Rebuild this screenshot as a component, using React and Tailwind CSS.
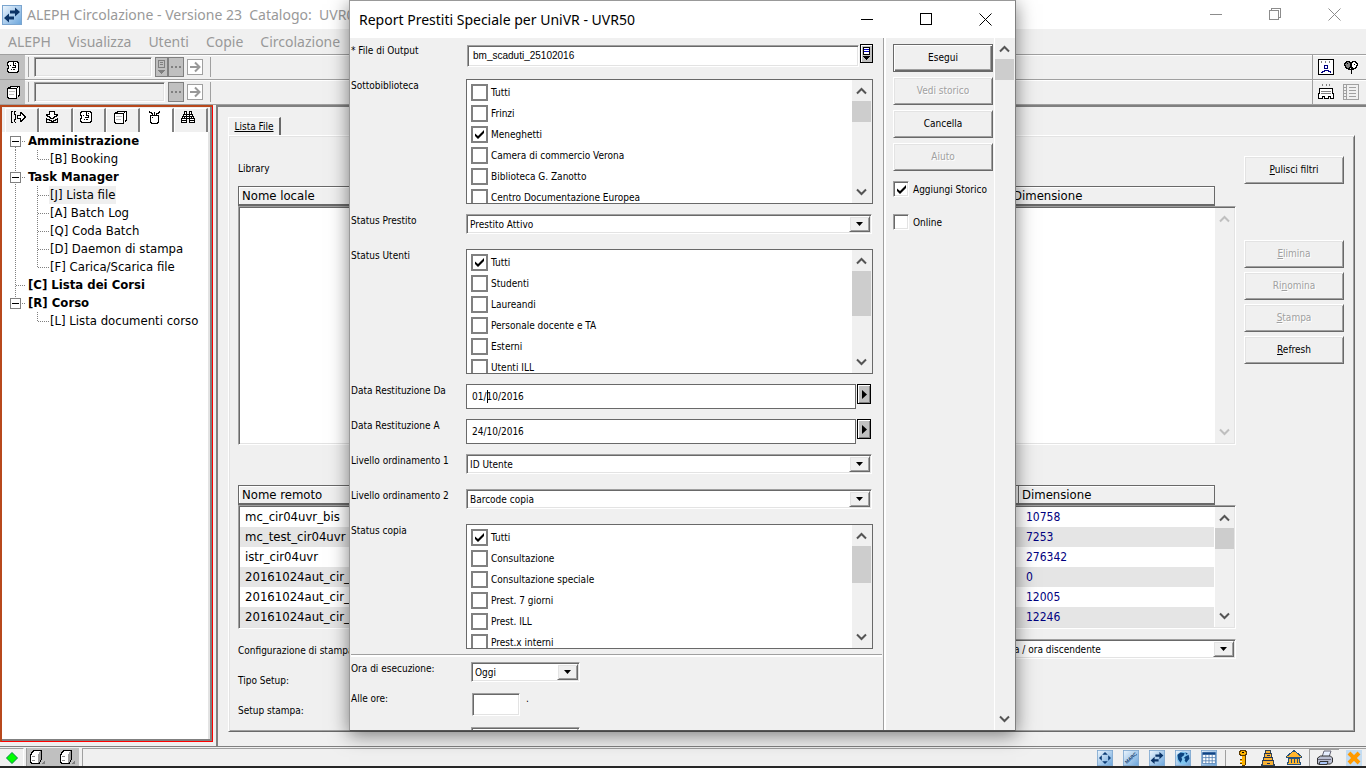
import { useState } from 'react';

const raised = 'border border-t-white border-l-white border-r-[#696969] border-b-[#696969] shadow-[inset_1px_1px_0_#e3e3e3,inset_-1px_-1px_0_#a0a0a0]';
const sunken = 'border border-t-[#a0a0a0] border-l-[#a0a0a0] border-r-white border-b-white shadow-[inset_1px_1px_0_#696969,inset_-1px_-1px_0_#e3e3e3]';

const sottobiblioteche = ['Tutti', 'Frinzi', 'Meneghetti', 'Camera di commercio Verona', 'Biblioteca G. Zanotto', 'Centro Documentazione Europea'];
const statusUtenti = ['Tutti', 'Studenti', 'Laureandi', 'Personale docente e TA', 'Esterni', 'Utenti ILL'];
const statusCopia = ['Tutti', 'Consultazione', 'Consultazione speciale', 'Prest. 7 giorni', 'Prest. ILL', 'Prest.x interni'];

const remoteFiles = [
  { name: 'mc_cir04uvr_bis', size: '10758' },
  { name: 'mc_test_cir04uvr', size: '7253' },
  { name: 'istr_cir04uvr', size: '276342' },
  { name: '20161024aut_cir_1', size: '0' },
  { name: '20161024aut_cir_50', size: '12005' },
  { name: '20161024aut_cir_51', size: '12246' },
];

const tree = [
  { label: 'Amministrazione', open: true, first: true },
  { label: '[B] Booking', child: true, last: true, trunk: true },
  { label: 'Task Manager', open: true },
  { label: '[J] Lista file', child: true, trunk: true, selected: true },
  { label: '[A] Batch Log', child: true, trunk: true },
  { label: '[Q] Coda Batch', child: true, trunk: true },
  { label: '[D] Daemon di stampa', child: true, trunk: true },
  { label: '[F] Carica/Scarica file', child: true, last: true, trunk: true },
  { label: '[C] Lista dei Corsi' },
  { label: '[R] Corso', open: true, end: true },
  { label: '[L] Lista documenti corso', child: true, last: true },
];

/* ---------- icons ---------- */

function Icon({ size = 16, children }) {
  return (
    <svg width={size} height={size} viewBox="0 0 16 16" fill="none" stroke="#000" shapeRendering="crispEdges" className="shrink-0" aria-hidden="true">
      {children}
    </svg>
  );
}

function UserIcon() {
  return (
    <Icon>
      <path d="M3.500 2.500h9v1h1v9h-1v1h-9v-1h-1v-3h1v-3h-1v-3h1z" fill="#fff" />
      <path d="M8.500 3v2h-1M8 6.500h2v2H7M10 4.500h1M5 6.500h1M6.500 10v1M8 10.500h2" />
    </Icon>
  );
}

function PagesIcon() {
  return (
    <Icon>
      <path d="M5.500 3.500v-1h9v9h-1v1h-1" fill="#fff" />
      <path d="M2.500 4.500h9v10h-8v-1h-1z" fill="#fff" />
      <path d="M4 7.500h6M4 10.500h5" stroke="#c0c0c0" />
      <path d="M3 3.500h2M12.500 3v1" />
    </Icon>
  );
}

function LoanIcon() {
  return (
    <Icon>
      <path d="M3 2.500H1.500v11H3M6 2.500H4.500v3h1v2M4.500 13.500H6M4.500 13v-3h1V8" />
      <path d="M7.500 6.500h3v-3h1v1h1v1h1v1h1v1h1v1h-1v1h-1v1h-1v1h-1v1h-1v-3h-3z" fill="#fff" />
    </Icon>
  );
}

function ReturnIcon() {
  return (
    <Icon>
      <path d="M5.500 2.500h5v3h3v1h-1v1h-2v1h-1v1h-3v-1h-1v-1h-2v-1h-1v-1h3z" fill="#fff" />
      <path d="M2.500 9v4.500h11V9M3 10.500h2v1h2v1h2v-1h2v-1h2" />
    </Icon>
  );
}

function AdminIcon() {
  return (
    <Icon>
      <path d="M4.500 6.500h8v7h-1v1h-6v-1h-1z" fill="#fff" />
      <path d="M8.500 6V3M6.500 6V4.500H5V3.500H3.500V2M10.500 6V4.500H12V3.500h1.500V2M6 8.500h1" />
    </Icon>
  );
}

function BinocularsIcon() {
  return (
    <Icon>
      <path d="M4.500 2.500h2v3h3v-3h2v3h1v2h1v2h1v4h-5v-4h-3v4h-5v-4h1v-2h1v-2h1z" fill="#fff" />
      <path d="M4 5.500h8M3 7.500h10M2 9.500h12M2 11.500h4M10 11.500h4M6.500 5v5M9.500 5v5M4.500 8v2M11.500 8v2" />
    </Icon>
  );
}

function AlephIcon({ size = 16, kind = 'swap' }) {
  return (
    <svg width={size} height={size} viewBox="0 0 20 20" className="shrink-0" aria-hidden="true">
      <defs>
        <linearGradient id="tile" x1="0" y1="0" x2="1" y2="1">
          <stop offset="0" stopColor="#eef6fd" />
          <stop offset="1" stopColor="#6aa5dc" />
        </linearGradient>
      </defs>
      <rect x=".5" y=".5" width="19" height="19" fill="url(#tile)" stroke="#7ba5cf" />
      {kind === 'swap' && <path d="M18 7l-5-4.500V5.500H8v3h5v3zM2 13l5 4.500V14.500h5v-3H7v-3z" fill="#0b3366" />}
      {kind === 'move' && <path d="M10 2.500l3.500 3.500h-7zM10 17.500l3.500-3.500h-7zM2.500 10l3.500-3.500v7zM17.500 10l-3.500-3.500v7z" fill="#0b3b74" />}
      {kind === 'globe' && (
        <g>
          <circle cx="10" cy="10" r="8" fill="#7fc4ee" />
          <path d="M3 6l4-3 5 1-1 3-3 2 1 3-2 4-3-4zM13 8l4-2 1 5-4 5-2-3 1-2-2-1zM13 3l3 1-2 2z" fill="#0b4480" />
        </g>
      )}
      {kind === 'grid' && (
        <g>
          <path d="M2 3h16v14H2z" fill="#fff" stroke="#4a7ab0" />
          <path d="M2 3h16v3H2z" fill="#0f4485" />
          <path d="M2 9.500h16M2 13.500h16M6 6v11M10 6v11M14 6v11" stroke="#4a7ab0" />
        </g>
      )}
      {kind === 'marc' && (
        <text x="10" y="12" transform="rotate(-42 10 10)" textAnchor="middle" fontSize="6" fontWeight="bold" fontFamily="Liberation Sans, sans-serif" fill="#123b6e">MARC</text>
      )}
    </svg>
  );
}

function KeyIcon() {
  return (
    <Icon>
      <path d="M8 6h3v9H8v-2H6v-1h2v-1H6v-1h2z" fill="#ffb400" stroke="none" />
      <path d="M11.500 6v9M8 15.500h3M6 13.500h2M6 9.500h2" stroke="#5b3a00" />
      <path d="M6.500 .500h5v1h1v3h-1v1h-5v-1h-1v-3h1z" fill="#ffb400" stroke="#5b3a00" />
      <path d="M8 2.500h2" />
    </Icon>
  );
}

function TowerIcon() {
  return (
    <Icon>
      <path d="M5.500 .500h5v3h1v4h1v3h1v4h1v1h-13v-1h1v-4h1v-3h1v-4h1z" fill="#f8b133" stroke="#345" />
      <path d="M5 3.500h6M4 7.500h8M3 10.500h10M7 5.500h3M7 13.500h3" stroke="#235" />
    </Icon>
  );
}

function BankIcon() {
  return (
    <Icon>
      <path d="M8 .500l7.500 6v1H.500v-1z" fill="#ffb52e" stroke="#24507c" />
      <path d="M2.500 8.500h11v4h1v2h-13v-2h1z" fill="#ffb52e" stroke="#24507c" />
      <path d="M5.500 8v5M8.500 8v5M11.500 8v5" stroke="#24507c" />
    </Icon>
  );
}

function PrinterIcon() {
  return (
    <svg width="18" height="16" viewBox="0 0 18 16" stroke="#333" className="shrink-0" aria-hidden="true">
      <path d="M6 7l2-6h7l-2 6z" fill="#e6efff" stroke="#667" />
      <path d="M1.500 8l3-2h10l2 2v4l-2 2h-13z" fill="#b9bed2" />
      <path d="M2 9.500h13" stroke="#667" />
      <path d="M4 11.500h8l-1 3H3z" fill="#a9c4f5" />
    </svg>
  );
}

function CubeIcon() {
  return (
    <Icon>
      <path d="M13 15l3-4v3l-1 1z" fill="#808080" stroke="none" />
      <path d="M1.500 5.500h1v-2h1v-1h1v-1h8v9h-1v2h-1v2h-8v-1h-1z" fill="#fff" />
      <path d="M9 5h1V3h1V2h1v9h-1v2h-1v1H9z" fill="#a0a0a0" stroke="none" />
      <path d="M3 7.500h3M3 11.500h3" stroke="#888" />
    </Icon>
  );
}

function Chevron({ up, faint }) {
  return (
    <svg width="11" height="8" viewBox="0 0 11 8" fill="none" stroke={faint ? '#bfbfbf' : '#555'} strokeWidth="2" className="shrink-0" aria-hidden="true">
      <path d={up ? 'M1 6.500L5.500 2L10 6.500' : 'M1 1.500L5.500 6L10 1.500'} />
    </svg>
  );
}

function WindowButtons({ muted }) {
  const stroke = muted ? '#8c8c8c' : '#000';
  return (
    <div className="flex gap-[46px]">
      <button aria-label="Riduci"><svg width="13" height="13" stroke={stroke} shapeRendering="crispEdges"><path d="M0 6.500h12" /></svg></button>
      <button aria-label="Ingrandisci">
        <svg width="13" height="13" fill="none" stroke={stroke} shapeRendering="crispEdges">
          {muted ? <path d="M.500 2.500h9v9h-9zM2.500 2V.500h9v9H10" /> : <path d="M.500 .500h11v11H.500z" />}
        </svg>
      </button>
      <button aria-label="Chiudi"><svg width="13" height="13" stroke={stroke}><path d="M.500 .500l12 12M12.500 .500l-12 12" /></svg></button>
    </div>
  );
}

/* ---------- controls ---------- */

function ScrollBar({ thumb, faint }) {
  return (
    <div className="flex w-[19px] shrink-0 flex-col items-center bg-[#f0f0f0]">
      <div className="flex h-[21px] items-center"><Chevron up faint={faint} /></div>
      {thumb && <div className={`w-full bg-[#cdcdcd] ${thumb}`} />}
      <div className="mt-auto flex h-[22px] items-center"><Chevron faint={faint} /></div>
    </div>
  );
}

function PushButton({ children, disabled, main }) {
  return (
    <button
      disabled={disabled}
      className={`flex h-7 w-[100px] items-center justify-center bg-[#f0f0f0] pb-[2px] disabled:text-[#a0a0a0] disabled:[text-shadow:1px_1px_0_#fff] ${main ? 'border border-[#696969] shadow-[inset_1px_1px_0_#fff,inset_-1px_-1px_0_#696969,inset_-2px_-2px_0_#a0a0a0]' : raised}`}
    >
      {children}
    </button>
  );
}

function CheckBox({ label, defaultChecked, flat }) {
  return (
    <label className={flat ? 'flex h-[21px] items-center gap-[3px]' : 'flex h-4 items-center gap-1'}>
      <span className="grid shrink-0 place-items-center">
        <input
          type="checkbox"
          defaultChecked={defaultChecked}
          className={`peer col-start-1 row-start-1 appearance-none bg-white ${flat ? 'size-[17px] border-2 border-[#808080]' : `size-4 ${sunken}`}`}
        />
        <svg width="9" height="9" viewBox="0 0 9 9" className="pointer-events-none invisible col-start-1 row-start-1 peer-checked:visible" aria-hidden="true">
          <path d="M0 3.500l3 2.500L9 0v3L3 9L0 6z" />
        </svg>
      </span>
      <span className="whitespace-nowrap">{label}</span>
    </label>
  );
}

function CheckList({ label, items, checked, thumb }) {
  return (
    <fieldset aria-label={label} className="flex h-[125px] min-w-0 flex-1 overflow-hidden border border-[#696969] bg-white">
      <div className="flex-1 overflow-hidden pt-[2px] pl-1">
        {items.map((item, i) => (
          <CheckBox key={item} label={item} defaultChecked={i === checked} flat />
        ))}
      </div>
      <ScrollBar thumb={thumb} />
      <div className="w-px bg-[#f0f0f0]" />
    </fieldset>
  );
}

function Combo({ id, value, label, className = '' }) {
  return (
    <div className={`flex h-5 bg-white p-px ${sunken} ${className}`}>
      <select id={id} aria-label={label} className="min-w-0 flex-1 appearance-none pl-[2px] outline-none" defaultValue={value}>
        <option>{value}</option>
      </select>
      <span className={`flex w-[21px] shrink-0 items-center justify-center bg-[#f0f0f0] ${raised}`}>
        <svg width="7" height="4" aria-hidden="true"><path d="M0 0h7L3.500 4z" /></svg>
      </span>
    </div>
  );
}

function FormRow({ label, htmlFor, tall, children }) {
  return (
    <div className={`flex items-start ${tall ? 'h-[135px]' : 'h-[35px]'}`}>
      <label htmlFor={htmlFor} className="w-[115px] shrink-0 leading-[14px] whitespace-nowrap">{label}</label>
      {children}
    </div>
  );
}

function DateField({ id, value, caret }) {
  return (
    <div className="relative flex flex-1 items-start gap-px pr-[2px]">
      <input id={id} defaultValue={value} className="h-[25px] min-w-0 flex-1 border border-[#696969] bg-white px-[5px] outline-none" />
      {caret && <span className="absolute top-[6px] left-[21px] h-[13px] w-px bg-black" />}
      <button type="button" aria-label="Scegli data" className="flex h-5 w-[14px] items-center justify-center border border-black bg-[#c0c0c0] shadow-[inset_1px_1px_0_#fff,inset_-1px_-1px_0_#808080]">
        <svg width="5" height="9" aria-hidden="true"><path d="M0 0v9L5 4.500z" /></svg>
      </button>
    </div>
  );
}

/* ---------- main window ---------- */

function ToolBar({ icon, history, children }) {
  return (
    <div className="flex h-[25px] shrink-0 border-b border-[#a0a0a0] shadow-[inset_0_1px_0_#fff]">
      <div className="flex w-[25px] items-center justify-center bg-[#c0c0c0]">{icon}</div>
      <div className="mx-[3px] my-[2px] w-px bg-[#a0a0a0]" />
      <div className="flex w-[171px] items-center gap-[3px] pl-[2px]">
        <input aria-label="Codice" className={`h-5 min-w-0 flex-1 bg-[#f0f0f0] ${sunken}`} />
        <div className="flex">
          {history && (
            <button aria-label="Storico" className="flex h-5 w-[13px] items-center justify-center border border-[#808080] bg-[#c0c0c0]">
              <svg width="9" height="16" fill="none" stroke="#808080" shapeRendering="crispEdges"><path d="M1.500 1.500h6v7h-6zM3 3.500h3M3 5.500h3" /><path d="M1 11h7l-3.500 4z" fill="#808080" stroke="none" /></svg>
            </button>
          )}
          <button aria-label="Cerca" className="flex h-5 w-4 items-center justify-center gap-[2px] border border-[#808080] bg-[#c0c0c0]">
            <i className="size-[2px] bg-[#808080]" /><i className="size-[2px] bg-[#808080]" /><i className="size-[2px] bg-[#808080]" />
          </button>
        </div>
        <button aria-label="Vai" className="flex size-4 items-center justify-center border border-[#a0a0a0] bg-white">
          <svg width="12" height="12" fill="none" stroke="#999" strokeWidth="2"><path d="M1 6h9M6 1.500L10.500 6L6 10.500" /></svg>
        </button>
      </div>
      <div className="mx-[7px] my-[2px] w-px bg-[#a0a0a0]" />
      <div className="ml-auto flex w-[54px] items-center gap-[9px] border-l border-[#a0a0a0] pl-[5px]">{children}</div>
    </div>
  );
}

function TreeRow({ item }) {
  const line = { stroke: '#808080', strokeDasharray: '1 1', shapeRendering: 'crispEdges' };
  return (
    <li className="flex h-[18px] items-center">
      {item.child ? (
        <svg width="44" height="18" fill="none" className="shrink-0" aria-hidden="true">
          {item.trunk && <path d="M10.500 0v18" {...line} />}
          <path d={item.last ? 'M32.500 0v9.500h11' : 'M32.500 0v18M32.500 9.500h11'} {...line} />
        </svg>
      ) : (
        <svg width="22" height="18" fill="none" className="shrink-0" aria-hidden="true">
          <path d={item.first ? 'M10.500 9v9' : item.end ? 'M10.500 0v9' : 'M10.500 0v18'} {...line} />
          <path d="M10.500 9.500h10" {...line} />
          {item.open && <path d="M5.500 4.500h10v10h-10z" fill="#fff" stroke="#808080" shapeRendering="crispEdges" />}
          {item.open && <path d="M7 9.500h7" stroke="#000" shapeRendering="crispEdges" />}
        </svg>
      )}
      <a
        href="#"
        className={`px-px text-[13px] leading-[18px] whitespace-nowrap ${item.child ? '' : 'font-bold'} ${item.selected ? 'bg-[#efefef]' : ''}`}
      >
        {item.label}
      </a>
    </li>
  );
}

function SidePanel() {
  const [tab, setTab] = useState(4);
  const icons = [<LoanIcon />, <ReturnIcon />, <UserIcon />, <PagesIcon />, <AdminIcon />, <BinocularsIcon />];
  const names = ['Prestito', 'Restituzione', 'Utente', 'Copie', 'Amministrazione', 'Ricerca'];

  return (
    <aside className="mb-1 flex w-[213px] shrink-0 flex-col border-t-2 border-r border-b border-l-2 border-t-[#b8481c] border-r-[#ff0000] border-b-[#ff0000] border-l-[#b8481c] bg-[#f0f0f0] shadow-[inset_-2px_-2px_0_#808080]">
      <div role="tablist" className="flex h-[25px] shrink-0 pt-px pr-1 pl-[3px]">
        {icons.map((icon, i) => (
          <button
            key={names[i]}
            role="tab"
            aria-label={names[i]}
            onClick={() => setTab(i)}
            className={`flex flex-1 justify-center border-t border-r-2 border-l border-t-white border-r-[#808080] border-l-white pr-[6px] ${tab === i ? 'bg-white' : ''}`}
          >
            {icon}
          </button>
        ))}
      </div>
      <div className="mr-[2px] mb-[2px] flex-1 border-r-2 border-r-[#e3e3e3] bg-white pl-[3px]">
        <ul>
          {tree.map((item) => <TreeRow key={item.label} item={item} />)}
        </ul>
      </div>
    </aside>
  );
}

function TableHead({ name, split }) {
  const cell = 'border-t border-r border-b-2 border-[#696969] px-[3px] text-left font-normal shadow-[inset_1px_1px_0_#fff]';
  return (
    <table className="mr-[21px] h-5 table-fixed border-separate border-spacing-0 text-[13px] leading-4">
      <thead>
        <tr>
          <th className={`border-l ${split} ${cell}`}>{name}</th>
          <th className={cell}>Dimensione</th>
        </tr>
      </thead>
    </table>
  );
}

function FilePanel() {
  return (
    <main className="flex min-w-0 flex-1 flex-col border-t-2 border-l-2 border-t-[#808080] border-l-[#808080] pt-[10px] pr-[11px] pb-[14px] pl-[10px]">
      <div className="flex h-[18px] shrink-0">
        <button className="w-[53px] border-t border-r-2 border-l border-t-white border-r-[#696969] border-l-white underline">Lista File</button>
      </div>
      <div className={`flex flex-1 pt-5 pr-[10px] pl-[9px] ${raised}`}>
        <div className="flex min-w-0 flex-1 flex-col">
          <div className="h-[30px] pt-[6px] leading-[14px]">Library</div>
          <TableHead name="Nome locale" split="w-[772px]" />
          <div className={`flex h-[239px] bg-white p-px ${sunken}`}>
            <div className="flex-1" />
            <ScrollBar faint />
          </div>
          <div className="h-10" />
          <TableHead name="Nome remoto" split="w-[781px]" />
          <div className={`flex h-[124px] items-stretch bg-white p-px ${sunken}`}>
            <div className="flex-1 overflow-hidden pr-px">
              <table className="w-full table-fixed border-collapse text-[13px] leading-5">
                <tbody>
                  {remoteFiles.map((f) => (
                    <tr key={f.name} className="h-5 even:bg-[#e5e5e5]">
                      <td className="w-[779px] pl-[5px]">{f.name}</td>
                      <td className="pl-[7px] text-[12px] text-[#000080]">{f.size}</td>
                    </tr>
                  ))}
                </tbody>
              </table>
            </div>
            <ScrollBar thumb="h-[21px]" />
          </div>
          <div className="mt-[10px] flex h-[30px] items-start">
            <label htmlFor="config" className="w-[756px] shrink-0 pt-[6px] leading-3">Configurazione di stampa:</label>
            <Combo id="config" value="Data / ora discendente" className="flex-1" />
          </div>
          <div className="h-[30px] pt-[6px] leading-3">Tipo Setup:</div>
          <div className="pt-[6px] leading-3">Setup stampa:</div>
        </div>
        <div className="ml-2 flex shrink-0 flex-col gap-1">
          <PushButton><span><u>P</u>ulisci filtri</span></PushButton>
          <div className="h-12" />
          <PushButton disabled><span><u>E</u>limina</span></PushButton>
          <PushButton disabled><span>Ri<u>n</u>omina</span></PushButton>
          <PushButton disabled><span><u>S</u>tampa</span></PushButton>
          <PushButton><span><u>R</u>efresh</span></PushButton>
        </div>
      </div>
    </main>
  );
}

function StatusBar() {
  return (
    <footer className="flex h-[22px] shrink-0 gap-[2px] border-t border-b-2 border-t-[#808080] border-b-[#262626] pt-px">
      <div className="flex w-6 items-center justify-center border-t border-r border-t-[#a0a0a0] border-r-white">
        <svg width="12" height="12" aria-hidden="true"><path d="M6 .500L11.500 6L6 11.500L.500 6z" fill="#0f0" stroke="#084" /></svg>
      </div>
      <div className="flex w-[53px] items-center gap-[14px] border-l border-[#a0a0a0] bg-[#c0c0c0] pl-[2px]"><CubeIcon /><CubeIcon /></div>
      <div className="ml-[1px] flex flex-1 items-center justify-end border-t border-l border-[#a0a0a0] pr-1">
        <div className="flex gap-[10px]">
          <AlephIcon kind="move" />
          <AlephIcon kind="marc" />
          <AlephIcon />
          <AlephIcon kind="globe" />
          <AlephIcon kind="grid" />
        </div>
        <div className="mx-2 h-4 w-px bg-[#a0a0a0]" />
        <div className="flex gap-[10px]">
          <KeyIcon />
          <TowerIcon />
          <BankIcon />
        </div>
        <div className="mx-[7px] flex w-[30px] justify-center border-t border-l border-[#a0a0a0]"><PrinterIcon /></div>
        <svg width="16" height="16" aria-hidden="true"><rect width="16" height="16" fill="#c3dcf2" /><path d="M3 3l10 10M13 3L3 13" stroke="#ff9a00" strokeWidth="4" /></svg>
      </div>
    </footer>
  );
}

/* ---------- dialog ---------- */

function ReportDialog() {
  return (
    <div role="dialog" aria-label="Report Prestiti Speciale per UniVR - UVR50" className="absolute top-0 left-[349px] flex h-[731px] w-[667px] flex-col border border-t-[#999] border-r-[#808080] border-b-[#555] border-l-[#999] bg-[#f0f0f0] shadow-[0_4px_18px_rgba(0,0,0,0.5)]">
      <header className="flex h-[37px] shrink-0 items-center justify-between bg-white pr-[23px] pl-[9px]">
        <h1 className="font-['Noto_Sans','Open_Sans',sans-serif] text-[14px] text-black">Report Prestiti Speciale per UniVR - UVR50</h1>
        <WindowButtons />
      </header>

      <div className="flex min-h-0 flex-1">
        <form className="flex min-w-0 flex-1 flex-col overflow-hidden border-r border-[#a0a0a0] pt-[6px]">
          <div className="flex flex-col pr-[10px] pl-px">
            <FormRow label="* File di Output" htmlFor="output">
              <div className="flex flex-1 items-start gap-px pl-px">
                <input id="output" defaultValue="bm_scaduti_25102016" className={`mt-px h-[22px] min-w-0 flex-1 bg-white px-[5px] pb-[2px] font-['Liberation_Sans',sans-serif] outline-none ${sunken}`} />
                <button type="button" aria-label="Storico file" className="flex h-[19px] w-[13px] items-center justify-center border border-black bg-[#c0c0c0] shadow-[inset_1px_1px_0_#fff]">
                  <svg width="9" height="15" fill="none" stroke="#000" shapeRendering="crispEdges" aria-hidden="true">
                    <path d="M1.500 1.500h6v7h-6z" fill="#fff" />
                    <path d="M2 3.500h5M2 5.500h5" stroke="#0000c0" />
                    <path d="M1 10h7l-3.500 4z" fill="#000" stroke="none" />
                  </svg>
                </button>
              </div>
            </FormRow>
            <FormRow label="Sottobiblioteca" tall>
              <CheckList label="Sottobiblioteca" items={sottobiblioteche} checked={2} thumb="h-[21px]" />
            </FormRow>
            <FormRow label="Status Prestito" htmlFor="prestito">
              <Combo id="prestito" value="Prestito Attivo" className="mr-px flex-1" />
            </FormRow>
            <FormRow label="Status Utenti" tall>
              <CheckList label="Status Utenti" items={statusUtenti} checked={0} thumb="h-[45px]" />
            </FormRow>
            <FormRow label="Data Restituzione Da" htmlFor="da"><DateField id="da" value="01/10/2016" caret /></FormRow>
            <FormRow label="Data Restituzione A" htmlFor="a"><DateField id="a" value="24/10/2016" /></FormRow>
            <FormRow label="Livello ordinamento 1" htmlFor="ord1"><Combo id="ord1" value="ID Utente" className="mr-px flex-1" /></FormRow>
            <FormRow label="Livello ordinamento 2" htmlFor="ord2"><Combo id="ord2" value="Barcode copia" className="mr-px flex-1" /></FormRow>
            <FormRow label="Status copia" tall>
              <CheckList label="Status copia" items={statusCopia} checked={0} thumb="h-[37px]" />
            </FormRow>
          </div>
          <div className="-mt-[5px] mr-px ml-px h-[3px] shrink-0 border-t border-b-2 border-t-[#a0a0a0] border-b-white" />
          <div className="flex flex-col pt-[5px] pl-px">
            <div className="flex h-[30px] items-start">
              <label htmlFor="esecuzione" className="w-[120px] leading-[14px]">Ora di esecuzione:</label>
              <Combo id="esecuzione" value="Oggi" className="w-[109px]" />
            </div>
            <div className="flex h-[35px] items-start">
              <label htmlFor="ore" className="w-[121px] leading-[14px]">Alle ore:</label>
              <input id="ore" className={`mt-px h-[23px] w-12 bg-white px-1 ${sunken}`} />
              <span className="pl-[6px] leading-[14px]">.</span>
            </div>
            <Combo label="Ripetizione" value="" className="ml-[120px] w-[109px] shrink-0" />
          </div>
        </form>

        <div className="flex w-[111px] shrink-0 flex-col gap-[5px] border-r border-l-2 border-white pt-[6px] pl-[7px]">
          <PushButton main>Esegui</PushButton>
          <PushButton disabled>Vedi storico</PushButton>
          <PushButton>Cancella</PushButton>
          <PushButton disabled>Aiuto</PushButton>
          <div className="mt-[5px] flex flex-col gap-[17px]">
            <CheckBox label="Aggiungi Storico" defaultChecked />
            <CheckBox label="Online" />
          </div>
        </div>
        <ScrollBar thumb="h-[21px]" />
        <div className="w-px bg-[#f0f0f0]" />
      </div>
    </div>
  );
}

export default function App() {
  return (
    <div className="relative flex h-screen flex-col overflow-hidden bg-[#f0f0f0] font-['DejaVu_Sans_Condensed','DejaVu_Sans',sans-serif] text-[10px] text-black">
      <header className="flex h-[29px] shrink-0 items-center bg-white pr-[25px] pl-[2px]">
        <AlephIcon size={20} />
        <span className="ml-[5px] font-['Noto_Sans','Open_Sans',sans-serif] text-[14px] whitespace-pre text-[#999]">ALEPH Circolazione - Versione 23  Catalogo:  UVR01</span>
        <div className="ml-auto"><WindowButtons muted /></div>
      </header>
      <nav className="flex h-[26px] shrink-0 items-center gap-[17px] border-b border-[#a0a0a0] pl-2 font-['Noto_Sans','Open_Sans',sans-serif] text-[14px] text-[#999]">
        <a href="#">ALEPH</a>
        <a href="#">Visualizza</a>
        <a href="#">Utenti</a>
        <a href="#">Copie</a>
        <a href="#">Circolazione</a>
      </nav>
      <ToolBar icon={<UserIcon />} history>
        <Icon>
          <path d="M.500 .500h15v15H.500z" fill="#fff" />
          <path d="M3 2l1 2M7.500 2v2M12 2l-1 2" stroke="#808080" />
          <path d="M6.500 6.500h3v3h-3zM3 13.500h1v-1h2v-1h4v1h2v1h1" stroke="#000080" />
        </Icon>
        <Icon>
          <path d="M3.500 2.500h3v1h1v5h-1v1h-3v-1h-1v-2h-1v-2h1v-1h1z" fill="#808080" />
          <path d="M9.500 2.500h3v1h1v1h1v2h-1v2h-1v1h-3v-1h-1v-5h1z" fill="#fff" />
          <path d="M8 4v11M4 4.500h1M11 5.500h1M5 10.500h6" />
        </Icon>
      </ToolBar>
      <ToolBar icon={<PagesIcon />}>
        <Icon>
          <path d="M4 0l1 2M8.500 0v2M12 0l-1 2" stroke="#808080" />
          <path d="M1.500 4.500h13v5h1v5h-3v-2h-2v2h-4v-2h-2v2h-4v-5h1z" fill="#fff" />
          <path d="M3 7.500h10M3 9.500h10" stroke="#808080" />
        </Icon>
        <Icon>
          <path d="M.500 .500h15v15H.500zM3.500 1v14M1 3.500h2M1 6.500h2M1 9.500h2M1 12.500h2M6 3.500h7M6 6.500h7M6 9.500h7M6 12.500h7" stroke="#a0a0a0" />
        </Icon>
      </ToolBar>
      <div className="flex min-h-0 flex-1 gap-[3px]">
        <SidePanel />
        <FilePanel />
      </div>
      <StatusBar />
      <ReportDialog />
    </div>
  );
}
